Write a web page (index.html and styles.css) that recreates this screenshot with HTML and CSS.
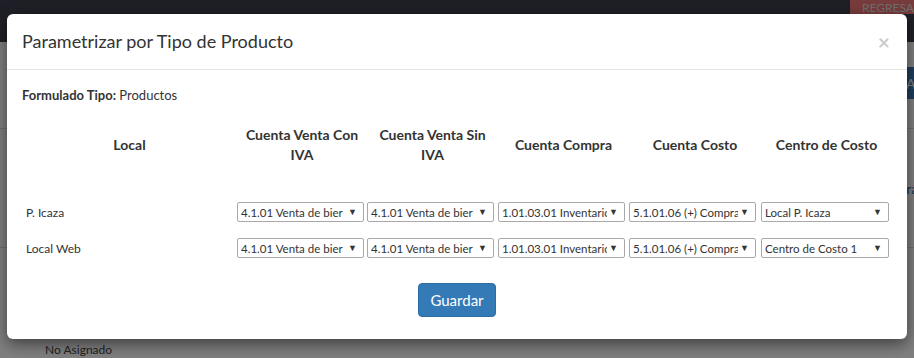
FILE: index.html
```html
<!DOCTYPE html>
<html lang="es">
<head>
    <meta charset="UTF-8">
    <meta name="viewport" content="width=device-width, initial-scale=1.0">
    <title>Parametrizar por Tipo de Producto</title>
    <link rel="stylesheet" href="styles.css">
</head>
<body>
    <div class="page">
        <header class="topbar">
            <span class="back">REGRESAR</span>
        </header>
        <div class="tools">
            <button class="btn-under">Autorizar</button>
        </div>
        <div class="under-rule"></div>
        <p class="under-label">Configuración</p>
        <div class="under-rule low"></div>
        <p class="no-asig">No Asignado</p>
    </div>

    <div class="backdrop"></div>

    <div class="modal">
        <div class="modal-header">
            <h4 class="modal-title">Parametrizar por Tipo de Producto</h4>
            <span class="close">&times;</span>
        </div>
        <div class="modal-body">
            <p class="tipo"><b>Formulado Tipo:</b> Productos</p>
            <table class="grid">
                <colgroup>
                    <col class="c-local">
                    <col class="c-130">
                    <col class="c-131">
                    <col class="c-131">
                    <col class="c-132">
                    <col class="c-131">
                </colgroup>
                <thead>
                    <tr>
                        <th>Local</th>
                        <th>Cuenta Venta Con IVA</th>
                        <th>Cuenta Venta Sin IVA</th>
                        <th>Cuenta Compra</th>
                        <th>Cuenta Costo</th>
                        <th>Centro de Costo</th>
                    </tr>
                </thead>
                <tbody>
                    <tr>
                        <td class="local">P. Icaza</td>
                        <td><span class="pick"><select><option>4.1.01 Venta de bier</option></select></span></td>
                        <td><span class="pick"><select><option>4.1.01 Venta de bier</option></select></span></td>
                        <td><span class="pick"><select><option>1.01.03.01 Inventario</option></select></span></td>
                        <td><span class="pick"><select><option>5.1.01.06 (+) Compras</option></select></span></td>
                        <td><span class="pick wide"><select><option>Local P. Icaza</option></select></span></td>
                    </tr>
                    <tr>
                        <td class="local">Local Web</td>
                        <td><span class="pick"><select><option>4.1.01 Venta de bier</option></select></span></td>
                        <td><span class="pick"><select><option>4.1.01 Venta de bier</option></select></span></td>
                        <td><span class="pick"><select><option>1.01.03.01 Inventario</option></select></span></td>
                        <td><span class="pick"><select><option>5.1.01.06 (+) Compras</option></select></span></td>
                        <td><span class="pick wide"><select><option>Centro de Costo 1</option></select></span></td>
                    </tr>
                </tbody>
            </table>
        </div>
        <div class="modal-footer">
            <button class="btn-save">Guardar</button>
        </div>
    </div>
</body>
</html>
```

FILE: styles.css
```css
html {
    font-family: 'Lato', 'Open Sans', sans-serif;
}

body {
    margin: 0;
    width: 914px;
    height: 358px;
    overflow: hidden;
    position: relative;
    background: #fff;
    color: #333;
}

/* page behind the dialog */
.topbar {
    height: 42px;
    background: #3e404e;
    display: flex;
    justify-content: flex-end;
    align-items: flex-start;
}

.back {
    height: 14px;
    width: 52px;
    overflow: hidden;
    background: #f07878;
    color: #ddd;
    font-size: 12px;
    line-height: 15px;
    padding-left: 12px;
    white-space: nowrap;
}

.tools {
    display: flex;
    justify-content: flex-end;
    margin-top: 25px;
}

.btn-under {
    height: 32px;
    width: 90px;
    margin-right: -82px;
    border: none;
    background: #3c7ab8;
    color: #fff;
    font-family: inherit;
    font-size: 14px;
    text-align: left;
    padding-left: 0;
}

.under-rule {
    height: 1px;
    background: #ddd;
    margin-top: 29px;
}

.under-rule.low {
    margin-top: 48px;
}

.under-label {
    margin: 50px -30px 0 0;
    text-align: right;
    font-size: 14px;
    line-height: 20px;
    color: #3c6a9a;
}

.no-asig {
    margin: 94px 0 0 45px;
    font-size: 12px;
    line-height: 16px;
    color: #444;
}

.backdrop {
    position: absolute;
    inset: 0;
    background: rgba(0, 0, 0, 0.5);
}

/* dialog */
.modal {
    position: absolute;
    top: 14px;
    left: 7px;
    width: 900px;
    background: #fff;
    border-radius: 6px;
    box-shadow: 0 5px 15px rgba(0, 0, 0, 0.5);
}

.modal-header {
    display: flex;
    justify-content: space-between;
    align-items: center;
    padding: 15px;
    border-bottom: 1px solid #e5e5e5;
}

.modal-title {
    margin: 0;
    font-size: 18px;
    line-height: 25px;
    font-weight: 400;
    color: #333;
}

.close {
    font-size: 21px;
    line-height: 20px;
    font-weight: bold;
    color: #000;
    opacity: 0.2;
    margin-right: 2px;
}

.modal-body {
    padding: 15px 15px 0;
}

.tipo {
    margin: 0 0 5px;
    font-size: 13px;
    line-height: 20px;
}

.grid {
    width: 870px;
    table-layout: fixed;
    border-collapse: collapse;
}

.c-local { width: 215px; }
.c-130 { width: 130px; }
.c-131 { width: 131px; }
.c-132 { width: 132px; }

.grid th {
    height: 54px;
    padding: 8px 4px 22px;
    font-size: 14px;
    line-height: 20px;
    font-weight: bold;
    text-align: center;
    vertical-align: middle;
}

.grid td {
    height: 36px;
    padding: 0;
    vertical-align: middle;
}

.grid td.local {
    padding-left: 4px;
    font-size: 12px;
}

.pick {
    position: relative;
    display: block;
    width: 127px;
}

.pick.wide {
    width: 128px;
}

.pick::after {
    content: "\25BC";
    position: absolute;
    right: 7px;
    top: 4px;
    font-size: 9px;
    line-height: 12px;
    color: #333;
    pointer-events: none;
}

.pick select {
    appearance: none;
    -webkit-appearance: none;
    display: block;
    width: 100%;
    height: 20px;
    padding: 0 17px 0 3px;
    border: 1px solid #a9a9a9;
    border-radius: 2px;
    background: #fff;
    font-family: inherit;
    font-size: 11.5px;
    color: #333;
}

.modal-footer {
    text-align: center;
    padding: 17px 0 22px;
}

.btn-save {
    width: 78px;
    height: 34px;
    border: 1px solid #2e6da4;
    border-radius: 4px;
    background: #337ab7;
    color: #fff;
    font-family: inherit;
    font-size: 15px;
    cursor: pointer;
}
```
